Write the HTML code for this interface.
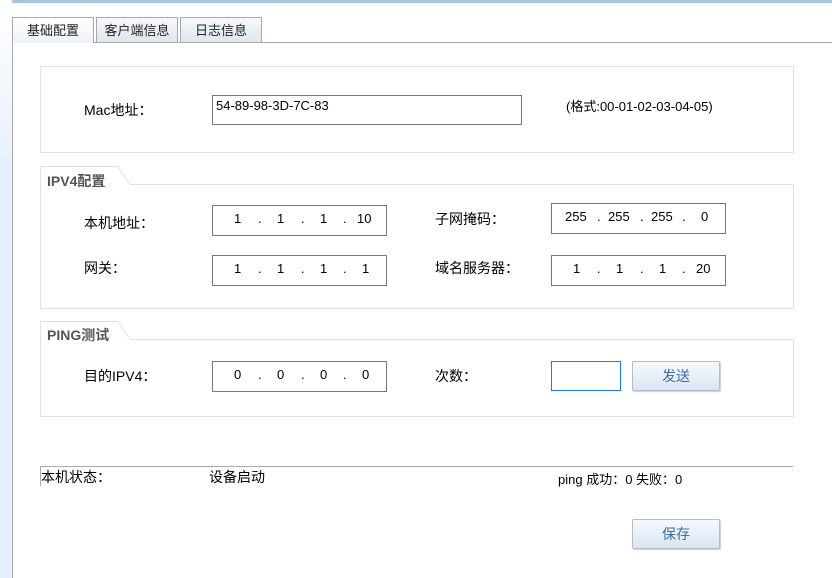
<!DOCTYPE html>
<html><head><meta charset="utf-8"><style>
*{margin:0;padding:0;box-sizing:border-box}
body{width:832px;height:578px;overflow:hidden;background:#fff;font-family:"Liberation Sans","Noto Sans CJK SC",sans-serif;font-size:13px;color:#000;position:relative}
.a{position:absolute}
.side{left:0;top:0;width:12px;height:578px;background:linear-gradient(#fff,#e6effc 30%,#e6effc)}
.tab{top:17px;height:25px;border:1px solid #a8a8a8;border-bottom:none;background:linear-gradient(#f6f8fb,#dfe6ef);text-align:center;line-height:25px;color:#222}
.box{border:1px solid #e1e1e1;background:#fff}
.inp{border:1px solid #777;background:#fff;height:31px}
.lbl{font-size:14px}
.btn{border:1px solid #b7bcc4;border-radius:2px;background:linear-gradient(#f6f9fd,#d9e5f2);color:#3d6fa8;text-align:center;font-size:14px;box-shadow:1px 1px 1px #ccc}
.ip{font-size:13px}
.ip span{position:absolute;top:5px}
.ht{font-weight:bold;color:#555;font-size:14px}
</style></head><body>
<div class="a" style="left:0;top:0;width:832px;height:3px;background:#a9c4de"></div>
<div class="a side"></div>
<div class="a" style="left:12px;top:42px;width:820px;height:1px;background:#aaa"></div>
<div class="a" style="left:12px;top:42px;width:1px;height:536px;background:#aaa"></div>
<div class="a tab" style="left:12px;width:82px;background:linear-gradient(#fff,#eef2f7);height:26px">基础配置</div>
<div class="a tab" style="left:96px;width:82px">客户端信息</div>
<div class="a tab" style="left:180px;width:82px">日志信息</div>

<div class="a box" style="left:40px;top:66px;width:754px;height:87px"></div>
<div class="a lbl" style="left:84px;top:100px">Mac地址：</div>
<div class="a inp" style="left:212px;top:95px;width:310px;height:30px"></div>
<div class="a" style="left:216px;top:98px;font-size:13px">54-89-98-3D-7C-83</div>
<div class="a" style="left:566px;top:96px;font-size:13px">(格式:00-01-02-03-04-05)</div>

<svg class="a" style="left:40px;top:166px" width="100" height="20"><path d="M0.5 19.5V0.5H78L90 18.5" fill="#fff" stroke="#e1e1e1"/></svg>
<div class="a box" style="left:40px;top:184px;width:754px;height:125px;border-top:1px solid #e1e1e1"></div>
<div class="a" style="left:41px;top:183px;width:89px;height:3px;background:#fff"></div>
<div class="a ht" style="left:47px;top:171px">IPV4配置</div>
<div class="a lbl" style="left:84px;top:213px">本机地址：</div>
<div class="a inp ip" style="left:212px;top:205px;width:175px"><span style="left:21px">1</span><span style="left:45px">.</span><span style="left:64px">1</span><span style="left:88px">.</span><span style="left:107px">1</span><span style="left:130px">.</span><span style="left:144px">10</span></div>
<div class="a lbl" style="left:435px;top:209px">子网掩码：</div>
<div class="a inp ip" style="left:551px;top:203px;width:175px"><span style="left:13px">255</span><span style="left:45px">.</span><span style="left:56px">255</span><span style="left:88px">.</span><span style="left:99px">255</span><span style="left:130px">.</span><span style="left:149px">0</span></div>
<div class="a lbl" style="left:84px;top:258px">网关：</div>
<div class="a inp ip" style="left:212px;top:255px;width:175px"><span style="left:21px">1</span><span style="left:45px">.</span><span style="left:64px">1</span><span style="left:88px">.</span><span style="left:107px">1</span><span style="left:130px">.</span><span style="left:149px">1</span></div>
<div class="a lbl" style="left:435px;top:258px">域名服务器：</div>
<div class="a inp ip" style="left:551px;top:255px;width:175px"><span style="left:21px">1</span><span style="left:45px">.</span><span style="left:64px">1</span><span style="left:88px">.</span><span style="left:107px">1</span><span style="left:130px">.</span><span style="left:144px">20</span></div>

<svg class="a" style="left:40px;top:321px" width="100" height="20"><path d="M0.5 19.5V0.5H78L90 18.5" fill="#fff" stroke="#e1e1e1"/></svg>
<div class="a box" style="left:40px;top:339px;width:754px;height:78px"></div>
<div class="a" style="left:41px;top:338px;width:89px;height:3px;background:#fff"></div>
<div class="a ht" style="left:47px;top:325px">PING测试</div>
<div class="a lbl" style="left:84px;top:366px">目的IPV4：</div>
<div class="a inp ip" style="left:212px;top:361px;width:175px"><span style="left:21px">0</span><span style="left:45px">.</span><span style="left:64px">0</span><span style="left:88px">.</span><span style="left:107px">0</span><span style="left:130px">.</span><span style="left:149px">0</span></div>
<div class="a lbl" style="left:435px;top:366px">次数：</div>
<div class="a" style="left:551px;top:361px;width:70px;height:30px;border:1px solid #1a7fd6"></div>
<div class="a btn" style="left:632px;top:361px;width:88px;height:30px;line-height:28px">发送</div>

<div class="a" style="left:40px;top:466px;width:753px;height:1px;background:#aaa"></div>
<div class="a" style="left:40px;top:466px;width:1px;height:20px;background:#aaa"></div>
<div class="a lbl" style="left:41px;top:467px">本机状态：</div>
<div class="a lbl" style="left:209px;top:467px">设备启动</div>
<div class="a" style="left:558px;top:469px;font-size:13px">ping 成功：0 失败：0</div>
<div class="a btn" style="left:632px;top:519px;width:88px;height:30px;line-height:28px">保存</div>
</body></html>
